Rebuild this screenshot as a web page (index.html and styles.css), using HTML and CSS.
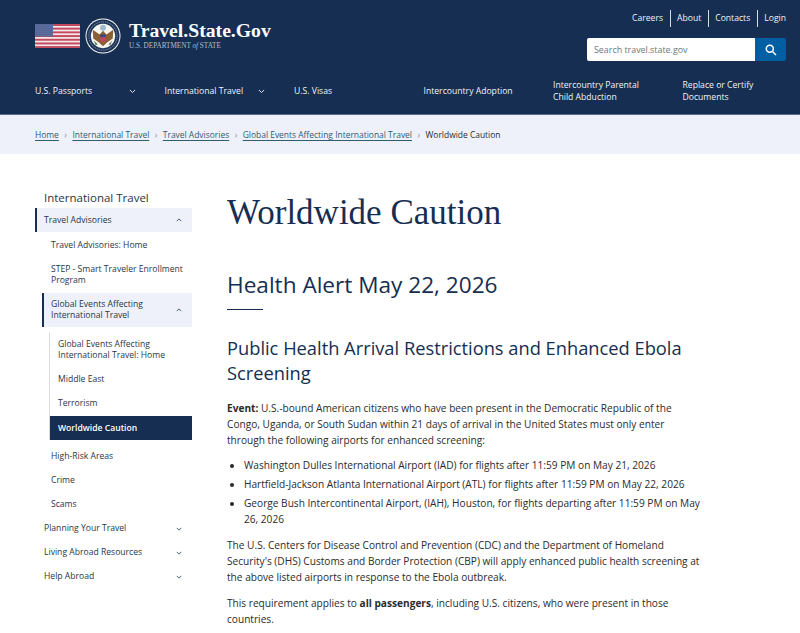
FILE: index.html
```html
<!DOCTYPE html>
<html lang="en">
<head>
  <meta charset="UTF-8">
  <meta name="viewport" content="width=device-width, initial-scale=1.0">
  <title>Worldwide Caution</title>
  <link rel="stylesheet" href="styles.css">
</head>
<body>
  <header class="site-header">
    <div class="header-top">
      <a class="logo" href="#">
        <svg class="flag" width="45" height="24" viewBox="0 0 45 24">
          <defs>
            <pattern id="stars" width="2" height="2" patternUnits="userSpaceOnUse">
              <rect width="2" height="2" fill="#46598c"/>
              <circle cx="1" cy="1" r="0.5" fill="#aab4d0"/>
            </pattern>
          </defs>
          <rect width="45" height="24" fill="#f3e6e8"/>
          <rect y="0" width="45" height="2" fill="#c4475c"/>
          <rect y="3.7" width="45" height="1.9" fill="#c4475c"/>
          <rect y="7.4" width="45" height="1.9" fill="#c4475c"/>
          <rect y="11.1" width="45" height="1.9" fill="#c4475c"/>
          <rect y="14.8" width="45" height="1.9" fill="#c4475c"/>
          <rect y="18.5" width="45" height="1.9" fill="#c4475c"/>
          <rect y="22.1" width="45" height="1.9" fill="#c4475c"/>
          <rect width="18" height="12.5" fill="url(#stars)"/>
        </svg>
        <svg class="seal" width="36" height="36" viewBox="0 0 37 37">
          <circle cx="18.5" cy="18.5" r="18" fill="#f4f4f2"/>
          <circle cx="18.5" cy="18.5" r="17" fill="#1d3557"/>
          <circle cx="18.5" cy="18.5" r="14.5" fill="none" stroke="#c9d2de" stroke-width="0.7" stroke-dasharray="1 1"/>
          <circle cx="18.5" cy="18.5" r="12.5" fill="#f7f6f0"/>
          <circle cx="18.5" cy="10" r="3" fill="#9dbad0"/>
          <path d="M18.5 13 L15 17 L8 12 L8.5 21 L14 25 L18.5 29 L23 25 L28.5 21 L29 12 L22 17 Z" fill="#8a5f32"/>
          <rect x="15.5" y="17" width="6" height="7.5" fill="#b5485a"/>
          <rect x="15.5" y="17" width="6" height="2.4" fill="#2f4a80"/>
          <path d="M9 23 L13 27 L11 28 Z" fill="#4f7a4a"/>
          <path d="M28 23 L24 27 L26 28 Z" fill="#7d7d70"/>
        </svg>
        <span class="logo-text">
          <span class="logo-title">Travel.State.Gov</span>
          <span class="logo-sub">U.S. DEPARTMENT <i>of</i> STATE</span>
        </span>
      </a>
      <div class="header-right">
        <nav class="util-nav">
          <a href="#">Careers</a>
          <a href="#">About</a>
          <a href="#">Contacts</a>
          <a href="#">Login</a>
        </nav>
        <form class="search">
          <input type="text" placeholder="Search travel.state.gov">
          <button type="button" aria-label="Search">
            <svg width="12" height="12" viewBox="0 0 12 12" fill="none" stroke="#fff" stroke-width="1.5">
              <circle cx="4.8" cy="4.8" r="3.5"/>
              <path d="M7.5 7.5 L11 11"/>
            </svg>
          </button>
        </form>
      </div>
    </div>
    <nav class="main-nav">
      <a href="#">U.S. Passports <svg class="chev" viewBox="0 0 8 5"><path d="M1 1 L4 4 L7 1"/></svg></a>
      <a href="#">International Travel <svg class="chev" viewBox="0 0 8 5"><path d="M1 1 L4 4 L7 1"/></svg></a>
      <a href="#">U.S. Visas</a>
      <a href="#">Intercountry Adoption</a>
      <a href="#">Intercountry Parental<br>Child Abduction</a>
      <a href="#">Replace or Certify<br>Documents</a>
    </nav>
  </header>

  <div class="breadcrumb">
    <a href="#">Home</a><span class="sep">&rsaquo;</span>
    <a href="#">International Travel</a><span class="sep">&rsaquo;</span>
    <a href="#">Travel Advisories</a><span class="sep">&rsaquo;</span>
    <a href="#">Global Events Affecting International Travel</a><span class="sep">&rsaquo;</span>
    <span>Worldwide Caution</span>
  </div>

  <div class="page">
    <aside class="sidebar">
      <div class="side-title">International Travel</div>
      <a class="side-item open" href="#"><span>Travel Advisories</span><svg class="chev dark" viewBox="0 0 8 5"><path d="M1 4 L4 1 L7 4"/></svg></a>
      <a class="side-sub" href="#">Travel Advisories: Home</a>
      <a class="side-sub" href="#">STEP - Smart Traveler Enrollment Program</a>
      <a class="side-sub open" href="#"><span>Global Events Affecting<br>International Travel</span><svg class="chev dark" viewBox="0 0 8 5"><path d="M1 4 L4 1 L7 4"/></svg></a>
      <div class="side-third">
        <a href="#">Global Events Affecting International Travel: Home</a>
        <a href="#">Middle East</a>
        <a href="#">Terrorism</a>
        <a class="current" href="#">Worldwide Caution</a>
      </div>
      <a class="side-sub" href="#">High-Risk Areas</a>
      <a class="side-sub" href="#">Crime</a>
      <a class="side-sub" href="#">Scams</a>
      <a class="side-item" href="#"><span>Planning Your Travel</span><svg class="chev dark" viewBox="0 0 8 5"><path d="M1 1 L4 4 L7 1"/></svg></a>
      <a class="side-item" href="#"><span>Living Abroad Resources</span><svg class="chev dark" viewBox="0 0 8 5"><path d="M1 1 L4 4 L7 1"/></svg></a>
      <a class="side-item" href="#"><span>Help Abroad</span><svg class="chev dark" viewBox="0 0 8 5"><path d="M1 1 L4 4 L7 1"/></svg></a>
    </aside>
    <main class="content">
      <h1>Worldwide Caution</h1>
      <h2>Health Alert May 22, 2026</h2>
      <div class="rule"></div>
      <h3>Public Health Arrival Restrictions and Enhanced Ebola Screening</h3>
      <p><strong>Event:</strong> U.S.-bound American citizens who have been present in the Democratic Republic of the Congo, Uganda, or South Sudan within 21 days of arrival in the United States must only enter through the following airports for enhanced screening:</p>
      <ul>
        <li>Washington Dulles International Airport (IAD) for flights after 11:59 PM on May 21, 2026</li>
        <li>Hartfield-Jackson Atlanta International Airport (ATL) for flights after 11:59 PM on May 22, 2026</li>
        <li>George Bush Intercontinental Airport, (IAH), Houston, for flights departing after 11:59 PM on May 26, 2026</li>
      </ul>
      <p>The U.S. Centers for Disease Control and Prevention (CDC) and the Department of Homeland Security's (DHS) Customs and Border Protection (CBP) will apply enhanced public health screening at the above listed airports in response to the Ebola outbreak.</p>
      <p>This requirement applies to <strong>all passengers</strong>, including U.S. citizens, who were present in those countries.</p>
    </main>
  </div>
</body>
</html>
```

FILE: styles.css
```css
html, body {
  height: 633px;
  overflow: hidden;
}

body {
  margin: 0;
  font-family: "Open Sans", sans-serif;
  color: #1b1b1b;
  background: #fff;
}

a {
  color: inherit;
  text-decoration: none;
}

.site-header {
  height: 114px;
  background: #162e51;
  color: #f0f3f8;
  padding: 0 14px 0 35px;
  border-bottom: 1px solid #5a6d8c;
}

.header-top {
  display: flex;
  justify-content: space-between;
  height: 70px;
}

.logo {
  display: flex;
  align-items: center;
  height: 70px;
  margin-top: 1px;
}

.flag {
  margin-right: 5px;
}

.seal {
  margin-right: 8px;
}

.logo-text {
  display: flex;
  flex-direction: column;
  margin-top: -2px;
}

.logo-title {
  font-family: "Liberation Serif", serif;
  font-size: 19.7px;
  font-weight: 700;
  line-height: 23px;
  color: #fff;
}

.logo-sub {
  font-family: "Liberation Serif", serif;
  font-size: 7.2px;
  line-height: 9px;
  color: #b4bfd0;
}

.header-right {
  display: flex;
  flex-direction: column;
  align-items: flex-end;
  padding-top: 9px;
}

.util-nav {
  display: flex;
  height: 18px;
  align-items: center;
  font-size: 8.6px;
}

.util-nav a {
  padding: 0 6.5px;
  line-height: 17px;
  border-left: 1px solid #d5dce6;
}

.util-nav a:first-child {
  border-left: 0;
}

.util-nav a:last-child {
  padding-right: 0;
}

.search {
  display: flex;
  margin-top: 11px;
  height: 23px;
}

.search input {
  width: 168px;
  box-sizing: border-box;
  height: 23px;
  padding: 0 7px;
  border: 0;
  border-radius: 2px 0 0 2px;
  background: #fff;
  font-family: "Open Sans", sans-serif;
  font-size: 8.9px;
  outline: none;
}

.search input::placeholder {
  color: #71767a;
}

.search button {
  width: 31px;
  height: 23px;
  padding: 0;
  border: 0;
  border-radius: 0 2px 2px 0;
  background: #005ea2;
  display: flex;
  align-items: center;
  justify-content: center;
}

.main-nav {
  display: grid;
  grid-template-columns: repeat(6, 129.5px);
  height: 42px;
  align-items: center;
  font-size: 8.65px;
  line-height: 12.5px;
}

.main-nav a {
  display: flex;
  align-items: center;
}

.main-nav a:nth-child(n+3) {
  display: block;
}

.main-nav a:nth-child(-n+2) {
  justify-content: space-between;
  padding-right: 29px;
}

.chev {
  width: 7px;
  height: 4.5px;
  fill: none;
  stroke: #e4e9f1;
  stroke-width: 1.1;
  flex: none;
}

.chev.dark {
  width: 6px;
  height: 4px;
  stroke: #2a3c57;
}

.breadcrumb {
  height: 39px;
  box-sizing: border-box;
  background: #eef1f9;
  padding: 0 35px;
  display: flex;
  align-items: center;
  font-size: 8.45px;
  color: #2b2b2b;
}

.breadcrumb a {
  color: #2f5d74;
  text-decoration: underline;
  text-underline-offset: 2px;
}

.sep {
  margin: 0 5.5px;
  color: #808a99;
}

.page {
  display: flex;
  padding: 36px 0 0 35px;
}

.sidebar {
  width: 157px;
  flex: none;
  font-size: 8.6px;
  line-height: 11px;
  color: #2a3547;
}

.side-title {
  padding-left: 9px;
  margin-bottom: 3px;
  font-size: 11.5px;
  line-height: 15px;
}

.side-item {
  display: flex;
  justify-content: space-between;
  align-items: center;
  padding: 6.5px 10px 6.5px 9px;
}

.side-item.open {
  margin-bottom: 1px;
  background: #eef1f9;
  box-shadow: inset 2px 0 0 #162e51;
}

.side-sub {
  display: block;
  padding: 6.5px 6px 6.5px 16px;
}

.side-sub.open {
  display: flex;
  justify-content: space-between;
  align-items: center;
  margin: 1px 0 0 7px;
  padding: 6px 10px 6px 9px;
  background: #eef1f9;
  box-shadow: inset 2px 0 0 #162e51;
}

.side-third {
  margin: 5px 0 4.5px 14px;
  border-left: 1px solid #d8dbe0;
}

.side-third a {
  display: block;
  padding: 6.5px 11px 6.5px 8px;
}

.side-third .current {
  margin-top: 1px;
  background: #162e51;
  color: #fff;
  font-weight: 600;
}

.content {
  width: 476px;
  margin-left: 35px;
  font-size: 10.13px;
  line-height: 16px;
  color: #2b2b2b;
}

h1 {
  margin: 2px 0 0;
  font-family: "Liberation Serif", serif;
  font-size: 35px;
  font-weight: 400;
  line-height: 42px;
  color: #162e51;
}

h2 {
  margin: 36px 0 0;
  font-size: 22.6px;
  font-weight: 400;
  line-height: 30px;
  color: #162e51;
}

.rule {
  width: 36px;
  height: 1px;
  margin-top: 9px;
  background: #162e51;
}

h3 {
  margin: 25px 0 15px;
  font-size: 18.3px;
  font-weight: 400;
  line-height: 25px;
  color: #162e51;
}

p {
  margin: 10px 0 0;
}

ul {
  margin: 9px 0 0;
  padding-left: 17px;
}

li {
  margin-bottom: 3.2px;
}
```
